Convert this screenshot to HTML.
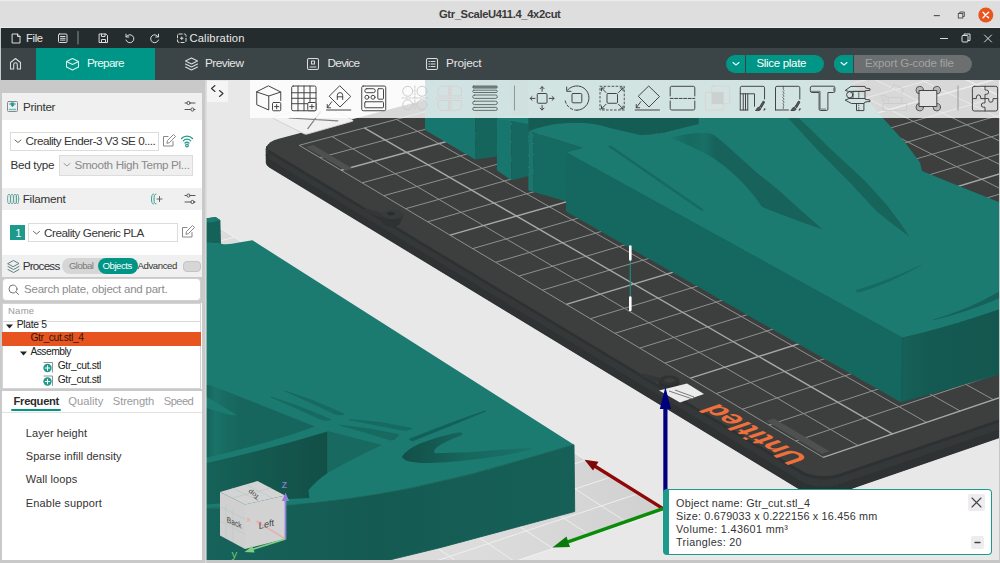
<!DOCTYPE html>
<html><head><meta charset="utf-8">
<style>
*{box-sizing:border-box;margin:0;padding:0}
html,body{width:1000px;height:563px;overflow:hidden;background:#e8e8e8;font-family:"Liberation Sans",sans-serif;}
#app{position:relative;width:1000px;height:563px;overflow:hidden;background:#c9c9c9}
.abs{position:absolute}
#title{left:0;top:0;width:1000px;height:28px;background:#dedede;border-bottom:1px solid #ebebeb;border-top:1px solid #ececec}
#title .t{position:absolute;left:0;width:1000px;top:7px;text-align:center;font-weight:bold;font-size:11.5px;color:#3a3a3a;letter-spacing:0.1px}
#menubar{left:1px;top:28px;width:999px;height:20px;background:#252c2e;color:#e8e8e8;font-size:11.5px}
#tabbar{left:1px;top:48px;width:999px;height:32px;background:#3b4548;color:#e6e6e6;font-size:12px}
#tabbar .active{position:absolute;left:35px;top:0;width:119px;height:32px;background:#009687}
.lb{position:absolute;white-space:nowrap;line-height:1}
#left{left:2px;top:93px;width:200px;height:467px;background:#fff}
.hdr{position:absolute;left:0;width:200px;background:#f0f0f0}
.txt{position:absolute;white-space:nowrap;color:#333}
svg{position:absolute;left:0;top:0}
</style></head><body>
<div id="app">
<svg width="1000" height="563" viewBox="0 0 1000 563">
<defs>
 <clipPath id="vp"><rect x="205" y="80" width="795" height="481"/></clipPath>
 <linearGradient id="flg" gradientUnits="userSpaceOnUse" x1="663" y1="508" x2="480" y2="520">
  <stop offset="0" stop-color="#d0d0d0"/><stop offset="1" stop-color="#dcdcdc"/>
 </linearGradient>
 <linearGradient id="frontL" gradientUnits="userSpaceOnUse" x1="205" y1="0" x2="575" y2="0">
  <stop offset="0" stop-color="#16635b"/><stop offset="0.45" stop-color="#145a52"/><stop offset="0.7" stop-color="#155d55"/><stop offset="1" stop-color="#166058"/>
 </linearGradient>
 <linearGradient id="frontR" gradientUnits="userSpaceOnUse" x1="900" y1="0" x2="1000" y2="0">
  <stop offset="0" stop-color="#166159"/><stop offset="0.3" stop-color="#145a53"/><stop offset="1" stop-color="#14574f"/>
 </linearGradient>
 <linearGradient id="pk2" gradientUnits="userSpaceOnUse" x1="670" y1="0" x2="760" y2="0">
  <stop offset="0" stop-color="#19756a"/><stop offset="0.22" stop-color="#166a60"/><stop offset="0.38" stop-color="#187066"/><stop offset="0.5" stop-color="#17635b"/><stop offset="1" stop-color="#17635b"/>
 </linearGradient>
 <linearGradient id="hook" gradientUnits="userSpaceOnUse" x1="402" y1="0" x2="534" y2="0">
  <stop offset="0" stop-color="#125048"/><stop offset="0.25" stop-color="#145a52"/><stop offset="0.5" stop-color="#17685f"/><stop offset="1" stop-color="#197268"/>
 </linearGradient>
 <linearGradient id="pkA" gradientUnits="userSpaceOnUse" x1="205" y1="0" x2="240" y2="0">
  <stop offset="0" stop-color="#15625a"/><stop offset="0.3" stop-color="#1a7268"/><stop offset="0.6" stop-color="#186b61"/><stop offset="1" stop-color="#17665d"/>
 </linearGradient>
 <linearGradient id="wallB" gradientUnits="userSpaceOnUse" x1="205" y1="0" x2="328" y2="0">
  <stop offset="0" stop-color="#16625a"/><stop offset="0.45" stop-color="#14594f"/><stop offset="1" stop-color="#124f47"/>
 </linearGradient>
</defs>
<g clip-path="url(#vp)">
<rect x="205" y="80" width="795" height="483" fill="#e8e8e8"/>
<polygon points="665.1,510.6 151.5,184.6 -693.2,409.8 -258.8,822.3" fill="url(#flg)"/>
<path d="M151.5,184.6 L665.1,510.6 M665.1,510.6 L-258.8,822.3 M117.0,193.8 L628.1,523.1 M638.2,493.6 L-281.9,800.3 M82.2,203.1 L590.6,535.7 M611.8,476.8 L-304.7,778.8 M47.1,212.5 L552.8,548.5 M585.7,460.2 L-327.0,757.5 M11.6,221.9 L514.5,561.4 M560.0,443.9 L-349.0,736.6 M-24.2,231.5 L475.8,574.5 M534.6,427.8 L-370.7,716.0 M-60.4,241.1 L436.6,587.7 M509.6,411.9 L-392.0,695.8 M-97.0,250.9 L396.9,601.0 M485.0,396.3 L-413.1,675.8 M-133.9,260.7 L356.8,614.6 M460.6,380.8 L-433.7,656.2 M-171.3,270.7 L316.2,628.3 M436.6,365.6 L-454.1,636.9 M-208.9,280.7 L275.2,642.1 M412.9,350.6 L-474.2,617.8 M-247.0,290.9 L233.6,656.2 M389.5,335.7 L-493.9,599.1 M-285.5,301.1 L191.5,670.3 M366.5,321.1 L-513.4,580.6 M-324.4,311.5 L149.0,684.7 M343.7,306.6 L-532.6,562.4 M-363.6,322.0 L105.9,699.2 M321.2,292.4 L-551.5,544.4 M-403.3,332.5 L62.2,714.0 M299.1,278.3 L-570.1,526.8 M-443.4,343.2 L18.1,728.9 M277.2,264.4 L-588.4,509.3 M-484.0,354.0 L-26.6,743.9 M255.5,250.7 L-606.5,492.1 M-524.9,365.0 L-71.9,759.2 M234.2,237.1 L-624.4,475.2 M-566.3,376.0 L-117.8,774.7 M213.1,223.8 L-642.0,458.5 M-608.2,387.2 L-164.2,790.3 M192.3,210.6 L-659.3,442.1 M-650.5,398.4 L-211.2,806.2 M171.8,197.5 L-676.4,425.8 M-693.2,409.8 L-258.8,822.3 M151.5,184.6 L-693.2,409.8" stroke="#f4f4f4" stroke-width="0.9" fill="none" opacity="0.85"/>
<!-- far sign -->
<polygon points="269.8,167.5 267.3,165.4 266.3,163.1 266.9,160.7 269.1,158.4 272.6,156.4 277.3,154.8 943.4,-23.2 948.0,-24.1 953.2,-24.5 958.7,-24.4 964.0,-23.8 968.8,-22.8 972.8,-21.4 1540.4,237.8 1544.3,240.1 1546.8,242.5 1547.8,245.1 1547.1,247.5 1544.9,249.7 1541.1,251.5 838.8,492.9 832.7,494.5 826.0,495.2 819.0,495.1 812.2,494.2 806.1,492.5 801.1,490.2" fill="#2e3131"/>
<polygon points="269.6,153.3 267.1,151.2 266.1,148.9 266.7,146.5 268.9,144.3 272.4,142.3 277.1,140.7 944.1,-36.1 948.7,-37.0 953.9,-37.5 959.4,-37.4 964.7,-36.8 969.5,-35.8 973.5,-34.3 1542.1,223.4 1546.0,225.6 1548.5,228.1 1549.5,230.7 1548.8,233.1 1546.6,235.3 1542.8,237.0 839.5,477.1 833.4,478.6 826.7,479.4 819.6,479.3 812.8,478.3 806.7,476.7 801.7,474.3" fill="#2e3131"/>
<polygon points="269.8,167.5 267.3,165.4 267.2,157.6 269.7,159.7" fill="#2f3232" stroke="#2f3232" stroke-width="0.5"/>
<polygon points="269.7,159.7 267.2,157.6 267.1,151.2 269.6,153.3" fill="#353838" stroke="#353838" stroke-width="0.5"/>
<polygon points="267.3,165.4 266.3,163.1 266.2,155.3 267.2,157.6" fill="#2f3232" stroke="#2f3232" stroke-width="0.5"/>
<polygon points="267.2,157.6 266.2,155.3 266.1,148.9 267.1,151.2" fill="#353838" stroke="#353838" stroke-width="0.5"/>
<polygon points="266.3,163.1 266.9,160.7 266.8,152.9 266.2,155.3" fill="#2f3232" stroke="#2f3232" stroke-width="0.5"/>
<polygon points="266.2,155.3 266.8,152.9 266.7,146.5 266.1,148.9" fill="#353838" stroke="#353838" stroke-width="0.5"/>
<polygon points="266.9,160.7 269.1,158.4 269.0,150.6 266.8,152.9" fill="#2f3232" stroke="#2f3232" stroke-width="0.5"/>
<polygon points="266.8,152.9 269.0,150.6 268.9,144.3 266.7,146.5" fill="#353838" stroke="#353838" stroke-width="0.5"/>
<polygon points="269.1,158.4 272.6,156.4 272.5,148.6 269.0,150.6" fill="#2f3232" stroke="#2f3232" stroke-width="0.5"/>
<polygon points="269.0,150.6 272.5,148.6 272.4,142.3 268.9,144.3" fill="#353838" stroke="#353838" stroke-width="0.5"/>
<polygon points="272.6,156.4 277.3,154.8 277.2,147.0 272.5,148.6" fill="#2f3232" stroke="#2f3232" stroke-width="0.5"/>
<polygon points="272.5,148.6 277.2,147.0 277.1,140.7 272.4,142.3" fill="#353838" stroke="#353838" stroke-width="0.5"/>
<polygon points="277.3,154.8 943.4,-23.2 943.8,-30.3 277.2,147.0" fill="#2f3232" stroke="#2f3232" stroke-width="0.5"/>
<polygon points="277.2,147.0 943.8,-30.3 944.1,-36.1 277.1,140.7" fill="#353838" stroke="#353838" stroke-width="0.5"/>
<polygon points="943.4,-23.2 948.0,-24.1 948.4,-31.2 943.8,-30.3" fill="#2f3232" stroke="#2f3232" stroke-width="0.5"/>
<polygon points="943.8,-30.3 948.4,-31.2 948.7,-37.0 944.1,-36.1" fill="#353838" stroke="#353838" stroke-width="0.5"/>
<polygon points="948.0,-24.1 953.2,-24.5 953.6,-31.6 948.4,-31.2" fill="#2f3232" stroke="#2f3232" stroke-width="0.5"/>
<polygon points="948.4,-31.2 953.6,-31.6 953.9,-37.5 948.7,-37.0" fill="#353838" stroke="#353838" stroke-width="0.5"/>
<polygon points="953.2,-24.5 958.7,-24.4 959.1,-31.5 953.6,-31.6" fill="#2f3232" stroke="#2f3232" stroke-width="0.5"/>
<polygon points="953.6,-31.6 959.1,-31.5 959.4,-37.4 953.9,-37.5" fill="#353838" stroke="#353838" stroke-width="0.5"/>
<polygon points="958.7,-24.4 964.0,-23.8 964.4,-31.0 959.1,-31.5" fill="#2f3232" stroke="#2f3232" stroke-width="0.5"/>
<polygon points="959.1,-31.5 964.4,-31.0 964.7,-36.8 959.4,-37.4" fill="#353838" stroke="#353838" stroke-width="0.5"/>
<polygon points="964.0,-23.8 968.8,-22.8 969.2,-29.9 964.4,-31.0" fill="#2f3232" stroke="#2f3232" stroke-width="0.5"/>
<polygon points="964.4,-31.0 969.2,-29.9 969.5,-35.8 964.7,-36.8" fill="#353838" stroke="#353838" stroke-width="0.5"/>
<polygon points="968.8,-22.8 972.8,-21.4 973.2,-28.5 969.2,-29.9" fill="#2f3232" stroke="#2f3232" stroke-width="0.5"/>
<polygon points="969.2,-29.9 973.2,-28.5 973.5,-34.3 969.5,-35.8" fill="#353838" stroke="#353838" stroke-width="0.5"/>
<polygon points="972.8,-21.4 1540.4,237.8 1541.3,229.9 973.2,-28.5" fill="#2f3232" stroke="#2f3232" stroke-width="0.5"/>
<polygon points="973.2,-28.5 1541.3,229.9 1542.1,223.4 973.5,-34.3" fill="#353838" stroke="#353838" stroke-width="0.5"/>
<polygon points="1540.4,237.8 1544.3,240.1 1545.2,232.1 1541.3,229.9" fill="#2f3232" stroke="#2f3232" stroke-width="0.5"/>
<polygon points="1541.3,229.9 1545.2,232.1 1546.0,225.6 1542.1,223.4" fill="#353838" stroke="#353838" stroke-width="0.5"/>
<polygon points="1544.3,240.1 1546.8,242.5 1547.8,234.6 1545.2,232.1" fill="#2f3232" stroke="#2f3232" stroke-width="0.5"/>
<polygon points="1545.2,232.1 1547.8,234.6 1548.5,228.1 1546.0,225.6" fill="#353838" stroke="#353838" stroke-width="0.5"/>
<polygon points="1546.8,242.5 1547.8,245.1 1548.7,237.2 1547.8,234.6" fill="#2f3232" stroke="#2f3232" stroke-width="0.5"/>
<polygon points="1547.8,234.6 1548.7,237.2 1549.5,230.7 1548.5,228.1" fill="#353838" stroke="#353838" stroke-width="0.5"/>
<polygon points="1547.8,245.1 1547.1,247.5 1548.1,239.6 1548.7,237.2" fill="#2f3232" stroke="#2f3232" stroke-width="0.5"/>
<polygon points="1548.7,237.2 1548.1,239.6 1548.8,233.1 1549.5,230.7" fill="#353838" stroke="#353838" stroke-width="0.5"/>
<polygon points="1547.1,247.5 1544.9,249.7 1545.8,241.8 1548.1,239.6" fill="#2f3232" stroke="#2f3232" stroke-width="0.5"/>
<polygon points="1548.1,239.6 1545.8,241.8 1546.6,235.3 1548.8,233.1" fill="#353838" stroke="#353838" stroke-width="0.5"/>
<polygon points="1544.9,249.7 1541.1,251.5 1542.1,243.5 1545.8,241.8" fill="#2f3232" stroke="#2f3232" stroke-width="0.5"/>
<polygon points="1545.8,241.8 1542.1,243.5 1542.8,237.0 1546.6,235.3" fill="#353838" stroke="#353838" stroke-width="0.5"/>
<polygon points="1541.1,251.5 838.8,492.9 839.2,484.2 1542.1,243.5" fill="#2f3232" stroke="#2f3232" stroke-width="0.5"/>
<polygon points="1542.1,243.5 839.2,484.2 839.5,477.1 1542.8,237.0" fill="#353838" stroke="#353838" stroke-width="0.5"/>
<polygon points="838.8,492.9 832.7,494.5 833.1,485.8 839.2,484.2" fill="#2f3232" stroke="#2f3232" stroke-width="0.5"/>
<polygon points="839.2,484.2 833.1,485.8 833.4,478.6 839.5,477.1" fill="#353838" stroke="#353838" stroke-width="0.5"/>
<polygon points="832.7,494.5 826.0,495.2 826.4,486.5 833.1,485.8" fill="#2f3232" stroke="#2f3232" stroke-width="0.5"/>
<polygon points="833.1,485.8 826.4,486.5 826.7,479.4 833.4,478.6" fill="#353838" stroke="#353838" stroke-width="0.5"/>
<polygon points="826.0,495.2 819.0,495.1 819.3,486.4 826.4,486.5" fill="#2f3232" stroke="#2f3232" stroke-width="0.5"/>
<polygon points="826.4,486.5 819.3,486.4 819.6,479.3 826.7,479.4" fill="#353838" stroke="#353838" stroke-width="0.5"/>
<polygon points="819.0,495.1 812.2,494.2 812.5,485.5 819.3,486.4" fill="#2f3232" stroke="#2f3232" stroke-width="0.5"/>
<polygon points="819.3,486.4 812.5,485.5 812.8,478.3 819.6,479.3" fill="#353838" stroke="#353838" stroke-width="0.5"/>
<polygon points="812.2,494.2 806.1,492.5 806.4,483.8 812.5,485.5" fill="#2f3232" stroke="#2f3232" stroke-width="0.5"/>
<polygon points="812.5,485.5 806.4,483.8 806.7,476.7 812.8,478.3" fill="#353838" stroke="#353838" stroke-width="0.5"/>
<polygon points="806.1,492.5 801.1,490.2 801.4,481.5 806.4,483.8" fill="#2f3232" stroke="#2f3232" stroke-width="0.5"/>
<polygon points="806.4,483.8 801.4,481.5 801.7,474.3 806.7,476.7" fill="#353838" stroke="#353838" stroke-width="0.5"/>
<polygon points="801.1,490.2 269.8,167.5 269.7,159.7 801.4,481.5" fill="#2f3232" stroke="#2f3232" stroke-width="0.5"/>
<polygon points="801.4,481.5 269.7,159.7 269.6,153.3 801.7,474.3" fill="#353838" stroke="#353838" stroke-width="0.5"/>
<polygon points="271.2,151.3 268.6,149.2 267.7,146.9 268.3,144.5 270.4,142.3 274.0,140.3 278.7,138.7 944.1,-37.6 948.7,-38.5 953.9,-38.9 959.3,-38.8 964.6,-38.2 969.5,-37.2 973.5,-35.8 1540.6,221.1 1544.6,223.4 1547.1,225.8 1548.1,228.4 1547.4,230.8 1545.1,233.0 1541.4,234.7 839.8,473.8 833.8,475.4 827.0,476.1 820.0,476.0 813.2,475.1 807.0,473.4 802.0,471.1" fill="#3c3f3e"/>

<path d="M299.2,145.3 L823.1,457.3 M299.2,145.3 L953.8,-29.2 M331.9,136.5 L857.9,445.5 M320.0,157.6 L976.2,-19.0 M396.4,119.3 L926.5,422.4 M362.3,182.8 L1021.7,1.8 M428.2,110.9 L960.2,411.0 M383.8,195.7 L1044.9,12.4 M459.7,102.5 L993.6,399.8 M405.6,208.7 L1068.3,23.1 M490.9,94.1 L1026.6,388.6 M427.7,221.8 L1092.0,33.9 M552.5,77.7 L1091.6,366.7 M472.7,248.6 L1140.1,55.9 M582.9,69.6 L1123.6,355.9 M495.7,262.3 L1164.6,67.1 M613.0,61.6 L1155.2,345.2 M518.9,276.1 L1189.4,78.4 M642.8,53.7 L1186.6,334.7 M542.5,290.1 L1214.5,89.8 M701.6,38.0 L1248.3,313.8 M590.5,318.7 L1265.5,113.1 M730.6,30.2 L1278.6,303.6 M614.9,333.3 L1291.5,125.0 M759.4,22.6 L1308.7,293.5 M639.7,348.1 L1317.8,137.0 M787.9,15.0 L1338.5,283.4 M664.9,363.1 L1344.4,149.2 M844.2,-0.0 L1397.1,263.6 M716.2,393.6 L1398.5,173.9 M871.9,-7.4 L1426.0,253.9 M742.4,409.2 L1426.1,186.5 M899.4,-14.8 L1454.6,244.2 M768.9,425.0 L1454.0,199.3 M926.7,-22.0 L1482.9,234.7 M795.8,441.0 L1482.3,212.2" stroke="#8d908f" stroke-width="1" fill="none"/>
<path d="M364.3,127.9 L892.4,433.9 M341.0,170.2 L998.8,-8.7 M521.9,85.9 L1059.3,377.6 M450.1,235.1 L1115.9,44.8 M672.3,45.8 L1217.6,324.2 M566.3,304.4 L1239.8,101.4 M816.1,7.4 L1367.9,273.5 M690.4,378.2 L1371.3,161.5 M953.8,-29.2 L1510.9,225.2 M823.1,457.3 L1510.9,225.2" stroke="#a6a8a7" stroke-width="1.4" fill="none"/>
<path d="M274,117.300 L318.500,104 Q320.400,103.400 322.300,104.400 L352.300,119.900 Q354,120.800 352,121.400 L307.400,134 Q305.400,134.600 303.500,133.600 L273.300,118.400 Q272.400,117.800 274,117.300Z" fill="#f0f0f0" stroke="#cfcfcf" stroke-width="0.900"/>
<path d="M289.200,118 L337.800,120.800 M320.400,111.800 L307.800,128.600" stroke="#808080" stroke-width="1.200" fill="none" stroke-linecap="round"/>
<!-- plate handles -->
<polygon points="306.0,147.0 313.2,145.1 353.0,168.7 345.7,170.7" fill="#4e5150"/>
<polygon points="766.3,420.9 774.0,418.4 829.4,451.3 821.8,453.9" fill="#4e5150"/>
<!-- knobs -->
<g><polygon points="364,208.500 383,213 384,219 362,210.500" fill="#343737"/><ellipse cx="391.500" cy="223" rx="8.500" ry="4" fill="#2f3232"/><polygon points="381.500,214.500 403.500,214.500 400,223.500 383,223.500" fill="#2f3232"/><ellipse cx="392.500" cy="214.500" rx="11" ry="4.600" fill="#383b3b"/><ellipse cx="391" cy="213.600" rx="4" ry="1.800" fill="#2b2e2e"/></g>
<g><ellipse cx="669" cy="383" rx="10.500" ry="5" fill="#2b2e2e"/><ellipse cx="669" cy="380.500" rx="10.500" ry="5" fill="#303333"/><ellipse cx="669.500" cy="380.300" rx="5.200" ry="2.400" fill="#3a3d3c"/><polygon points="643,373.500 659,377.500 659,383 641,376.500" fill="#343737"/></g>
<!-- plate label -->
<polygon points="659,390.500 687,383.500 704,394 680,402.500" fill="#ececec"/>
<path d="M669 391l22 7.500a2 2 0 0 0 3-1.500l-19-7" stroke="#7b7b7b" stroke-width="1" fill="none"/>
<text transform="matrix(-0.816,-0.50,0.95,-0.33,809,459)" font-family="Liberation Sans,sans-serif" font-size="30" font-weight="bold" fill="#f0703c" textLength="112" lengthAdjust="spacingAndGlyphs">Untitled</text>

<!-- ===== top-right model ===== -->
<!-- block1 -->
<polygon points="425,80 425,130 475.200,159.600 475.200,80" fill="#17766d"/>
<polygon points="475.200,80 475.200,159.600 496.900,156.600 496.900,80" fill="#15655d"/>
<!-- block2 -->
<polygon points="496.900,80 496.900,170.200 511.400,180.300 511.400,80" fill="#17766d"/>
<polygon points="511.400,80 511.400,180.300 528.400,176.300 528.400,80" fill="#15675f"/>
<polygon points="496.900,119.500 505,116 540,116 528.400,124 511.400,121" fill="#1b7d72"/>
<!-- block3 -->
<polygon points="528.400,131.100 528.400,190.300 533.500,192 533.500,133" fill="#18786f"/>
<polygon points="533.500,132.600 583,147.800 566.600,152.200 566.600,201.400 533.500,192" fill="#156a61"/>
<!-- main left side face -->
<polygon points="566.600,152.200 566.600,211.400 750,316 901.400,402.100 902.500,337.500" fill="#15685f" stroke="#15685f" stroke-width="1"/>
<!-- front right face -->
<path d="M902.500,337.500 L901.400,402.100 L1000,374 L1000,309 Q945,328 902.500,337.500Z" fill="url(#frontR)" stroke="#145a53" stroke-width="0.8"/>
<!-- top surface -->
<polygon points="528.400,80 700,80 700,126 640,136 585,125 560,123.500 528.400,131.100" fill="#1b7b70"/>
<path d="M902.500,337.500 L566.600,152.200 L583,147.800 L528.400,131.100 Q545,125 560,123.500 Q590,121 610,128 L640,135 Q660,134 670,131 L698.600,124 L698.600,80 L850,80 L882.500,117.500 L905,142.500 L920,162.500 L922,171 L950,182.500 L1000,202.500 L1000,309 Q945,328 902.500,337.500Z" fill="#1b7b70"/>
<!-- dark band under toolbar -->
<path d="M528.400,117.600 L528.400,131.100 Q545,125 560,123.500 Q590,121 610,128 L640,135 Q658,134 670,131 L698.600,124 L698.600,117.600Z" fill="#145c54"/>
<!-- groove1 -->
<path d="M608.500,146.500 L611,146 L703,209.500 L702,210.800Z" fill="#176a60" stroke="#176a60" stroke-width="0.800"/>
<!-- pocket2 -->
<path d="M670.300,137.600 Q681,135 692.600,133.600 Q701,132.600 707.600,133 Q711,133.500 714,135.100 Q725,143.500 735.300,153.200 L756.600,172.400 L777.900,189.500 L799.300,208.700 L822.700,229.600 Q795,220 766.200,208.700 Q762.500,207.500 760.900,205.500 Q757,199.500 752.300,193.800 Q744,184 735.300,175.600 Q725,166 714,158.600 Q704,152.500 692.600,147.300 Q681,142 670.300,137.600Z" fill="url(#pk2)"/>
<!-- groove2 -->
<path d="M787.700,117.600 L798.400,117.600 L829,147.500 L864.600,180.600 Q878,195 888,206.600 Q900,222 909.500,236.800 Q892,224 876.400,211.300 L850.400,183 L817.300,149.800Z" fill="#17645b"/>
<!-- groove3 -->
<path d="M856,290.500 Q890,280 921,265.200 Q892,282 860,292 Q856,292 856,290.500Z" fill="#176a60" stroke="#176a60" stroke-width="0.500"/>
<!-- groove4 -->
<path d="M932,320 Q970,309 1000,291 L1000,298 Q965,313 932,320.500Z" fill="#16625a"/>
<!-- selected object -->
<path d="M630.300,246 V310" stroke="#1d8a7e" stroke-width="1.200"/>
<path d="M630.300,246.500 V259.500 M630.300,297.500 V310" stroke="#fff" stroke-width="2.600" stroke-linecap="round"/>

<!-- ===== bottom-left model ===== -->
<!-- left blob -->
<path d="M205,218.600 L215.600,217 L220.400,220.200 L221,244 L205,243Z" fill="#15625a"/>
<path d="M205,218.600 L215.600,217 L220.400,220.200 L212,222.300 L205,222.500Z" fill="#1b7b70"/>
<!-- top surface -->
<path d="M205,242 L221,243.700 Q226,244.800 232,243.800 L239,242.600 L252.400,240.300 L574,444.800 Q520,461 470,474.500 Q430,484 405,489.300 Q350,500 289,505.300 Q250,507.500 205,508.500Z" fill="#1b7b70"/>
<!-- front face -->
<path d="M205,508.500 Q250,507.500 289,505.300 Q350,500 405,489.300 Q430,484 470,474.500 Q520,461 574,444.800 L574.700,511.500 L440,547.700 L377,563 L205,563Z" fill="url(#frontL)" stroke="#155d55" stroke-width="0.9"/>
<!-- pocket A (triangle) -->
<path d="M205,384.800 Q210,385 216,387.300 L315,426.400 Q270,443 205,458Z" fill="url(#pkA)"/>
<path d="M205,395.500 L237,415.300 Q232,415.500 226,414 L205,407.500Z" fill="#1b7b70"/>
<!-- ridge then pocket B wall -->
<path d="M205,463.500 Q270,449 327.500,431.500 L327.500,473 Q316,481 308.400,490.300 L309.500,498 L289,499 L205,504.500Z" fill="url(#wallB)"/>
<path d="M327.500,431 L381.700,445 Q352,459 327.500,473Z" fill="#18695f"/>
<path d="M205,506 L290,503 Q296,492 310,484 Q285,490 262,492 Q240,493 205,492Z" fill="#1b7b70" opacity="0"/>
<!-- slots -->
<path d="M285,391 Q315,400 344,414 Q340,416 335,414 Q310,402 285,391Z" fill="#176a60" stroke="#176a60" stroke-width="0.800"/>
<path d="M271,397 Q300,406 331,419.500 Q327,421.500 321,419.500 Q296,408 271,397Z" fill="#176a60" stroke="#176a60" stroke-width="0.800"/>
<path d="M349,419.500 Q380,421 412,428.500 Q408,431 402,430 Q375,425 349,419.500Z" fill="#176a60" stroke="#176a60" stroke-width="0.800"/>
<path d="M339,425 Q370,428 399,434.500 Q395,441 390,440 Q365,432 339,425Z" fill="#18695f" stroke="#18695f" stroke-width="0.600"/>
<!-- groove -->
<path d="M410,439.200 Q450,423 485.500,411 Q450,426 412,440.800Z" fill="#14605a" stroke="#14605a" stroke-width="1.300"/>
<!-- hook pocket -->
<path d="M402,456.500 Q407,449 420,443.600 Q440,436 459,432.300 Q464,432.500 461.500,435.500 Q445,441 436.500,447.500 Q432.500,451.500 435,453.300 Q470,452.800 500,449.800 Q520,448.300 534,448.300 Q521,452.500 500,456 Q460,462 430,463 Q404,463.500 402,456.500Z" fill="url(#hook)"/>

<!-- axes -->
<path d="M665.400,508 V405" stroke="#00007c" stroke-width="4.2"/>
<path d="M665.400,387 L659.800,409 L671,409Z" fill="#00007c"/>
<path d="M663,508.600 L593,465" stroke="#8e0808" stroke-width="3.300"/>
<path d="M584.500,459.800 L598.500,461.800 L593,470.500Z" fill="#7e0606"/>
<path d="M663,508.600 L568,541.800" stroke="#0a8c0a" stroke-width="3.400"/>
<path d="M552.500,547.500 L566.500,536.500 L570,547Z" fill="#0a7a0a"/>

<!-- view cube -->
<g>
<polygon points="220,492 257.500,481 285,495.500 245,504.500" fill="#d4d4d4"/>
<polygon points="220,492 245,504.500 245,549 220,535.500" fill="#d0d0d0"/>
<polygon points="245,504.500 285,495.500 285,539 245,549" fill="#d2d2d2"/>
<path d="M232.500,488.300 L259,500.800 M246,484.500 L272,498 M232,498 L271,488 M226,506 V538.500 M233,509 V542 M220,506.500 L245,519 M220,521 L245,534" stroke="#bcc9c9" stroke-width="0.700" fill="none"/>
<path d="M285.500,539 L260,523.500" stroke="#e3b3b3" stroke-width="1.600"/><path d="M255.500,520.500 L262.500,521.500 L259.500,526Z" fill="#e3b3b3"/>
<path d="M285.500,539 V498" stroke="#8f80d8" stroke-width="1.800"/>
<path d="M285.500,492.500 L281.800,501 L289.200,501Z" fill="#8f80d8"/>
<path d="M285.500,539 L252,549.500" stroke="#80cf80" stroke-width="1.800"/>
<path d="M244.500,552 L252.500,546 L254.500,552.500Z" fill="#80cf80"/>
<text x="281.500" y="487.500" font-size="11.500" fill="#8f80d8" font-family="Liberation Sans,sans-serif">z</text>
<text x="231.500" y="557.500" font-size="11.500" fill="#6fc66f" font-family="Liberation Sans,sans-serif">y</text>
<text x="246.500" y="521.500" font-size="8" fill="#e7a5a5" font-family="Liberation Sans,sans-serif">x</text>
<text transform="matrix(0.780,0.340,0,1,226.800,522.300)" font-size="8.500" fill="#444" font-family="Liberation Sans,sans-serif">Back</text>
<text transform="matrix(0.970,-0.235,0,1,258.800,529.300)" font-size="9.500" fill="#444" font-family="Liberation Sans,sans-serif">Left</text>
<text transform="matrix(-0.776,-0.580,0.490,-0.660,260,496.500)" font-size="8" fill="#444" font-family="Liberation Sans,sans-serif">Top</text>
</g>
</g>
<!-- borders -->
<rect x="205" y="560" width="795" height="3" fill="#c6c6c6"/>
<rect x="205" y="80" width="1.600" height="483" fill="#d8d8d8"/>
<rect x="999" y="80" width="1" height="483" fill="#c6c6c6"/>
</svg>

<div class="abs" style="left:206.500px;top:81px;width:21.500px;height:20.500px;background:rgba(255,255,255,0.55)"></div>
<div class="abs" style="left:250px;top:80px;width:750px;height:37.500px;background:rgba(255,255,255,0.8)"></div>
<svg width="1000" height="563" viewBox="0 0 1000 563" fill="none" stroke="#454545" stroke-width="1" stroke-linejoin="round" stroke-linecap="round">
<path d="M215 85.500l-3.500 3 3.500 3 M219.500 90.500l3.500 3 -3.500 3" stroke="#333" stroke-width="1.100"/>
<!-- 1 cube+ -->
<path d="M268.750 86l12 6-12 4-12-4z M256.750 92v12.750l12 5.250v-14 M280.750 92v8.500"/>
<rect x="272.500" y="102.500" width="8.250" height="8.250" rx="1" fill="#fafafa"/><path d="M274.500 106.600h4.300M276.650 104.500v4.300"/>
<!-- 2 grid+ -->
<rect x="291.700" y="86" width="24.300" height="24.750" rx="1.500"/>
<path d="M298 86v24.750M304 86v24.750M310 86v16.500M291.700 92.750h24.300M291.700 98.300h24.300M291.700 103.700h16"/>
<rect x="307.750" y="102.500" width="8.250" height="8.250" rx="1" fill="#fafafa"/><path d="M309.750 106.600h4.300M311.900 104.500v4.300"/>
<!-- 3 auto orient -->
<path d="M340 86l10.800 10.500-10.800 10.500-10.500-10.500z M326.500 110h24.300 M331.750 101.750l-4.500 6 M327.250 104.500v3.250h3.300"/>
<path d="M337.300 99.500v-4.200a2.700 2.700 0 0 1 5.400 0v4.200 M337.300 96.800h5.400"/>
<!-- 4 arrange -->
<rect x="361.750" y="86" width="24" height="24.750" rx="1.500"/>
<rect x="364.750" y="88.700" width="10.500" height="4" rx="2"/><circle cx="366.900" cy="97.250" r="2"/><circle cx="373" cy="97.250" r="2"/>
<rect x="377.800" y="88.700" width="5.700" height="10.500" rx="0.800"/><rect x="364.750" y="101.750" width="18.750" height="6" rx="0.800"/>
<!-- 5 disabled split -->
<g stroke="#c9cccb"><circle cx="407.750" cy="91.250" r="5"/><circle cx="422" cy="91.250" r="5"/><circle cx="407.750" cy="104.750" r="5"/><circle cx="422" cy="104.750" r="5"/><path d="M402 98h26M414.900 86v24" stroke-dasharray="2 1.500"/></g>
<!-- 6 disabled split parts -->
<g stroke="#d9d0d0"><path d="M448 86h-5a5 5 0 0 0 -5 5v5h10z M451.500 86h5a5 5 0 0 1 5 5v5h-10z M448 110.500h-5a5 5 0 0 1 -5 -5v-5h10z M451.500 110.500h5a5 5 0 0 0 5 -5v-5h-10z"/><path d="M436 98.200h27M449.750 85v26" stroke-dasharray="2 1.500"/></g>
<!-- 7 layers -->
<g stroke="#556463" stroke-width="0.9"><rect x="472.700" y="86" width="24.600" height="2.100" rx="1.050" fill="#7e8c8b"/><rect x="472.700" y="90.200" width="24.600" height="2.300" rx="1.150"/><rect x="472.700" y="95" width="24.600" height="3.400" rx="1.700"/><rect x="472.700" y="101.200" width="24.600" height="3.400" rx="1.700"/><rect x="472.700" y="107.400" width="24.600" height="3" rx="1.500"/></g>
<path d="M514.500 86v24" stroke="#8a9a98"/>
<!-- 8 move -->
<rect x="537.250" y="93.500" width="9.750" height="9.750" rx="1"/>
<path d="M542.100 91.250v-4.500M540.200 88.600l1.900-1.900 1.900 1.900 M542.100 105.500v4.500M540.200 108.100l1.900 1.900 1.900-1.900 M535 98.400h-4.800M532.100 96.500l-1.900 1.900 1.900 1.900 M549.250 98.400h4.800M552.150 96.500l1.900 1.900-1.900 1.900"/>
<!-- 9 rotate -->
<rect x="572" y="93.500" width="9.800" height="9.300" rx="1"/>
<path d="M567.600 90a12.200 12.200 0 1 1 9.400 20.200"/><path d="M577 110.200a12.200 12.200 0 0 1 -12.100 -11" stroke-dasharray="2.500 2"/>
<path d="M566.700 87v4.300h4.300"/>
<!-- 10 scale -->
<rect x="600" y="86.300" width="24.250" height="23.700" stroke-dasharray="1.800 2.200" stroke-width="0.9"/>
<rect x="607" y="93.500" width="10.500" height="9.750" rx="1"/>
<path d="M606 92.500l-4.500-4.500M601.500 90.800v-2.800h2.800 M618.500 92.500l4.500-4.500M620.200 88h2.800v2.800 M606 104.300l-4.500 4.500M601.500 106v2.800h2.800 M618.500 104.300l4.500 4.500M620.200 108.800h2.800v-2.800"/>
<!-- 11 lay flat -->
<path d="M649 86.300l10.500 10.200-10.500 10.500-10.500-10.500z M635.200 110h24.300 M640.750 101.750l-4.500 6 M636.250 104.500v3.250h3.300"/>
<!-- 12 cut -->
<path d="M670.200 96v-8.200a1.500 1.500 0 0 1 1.500-1.500h21.600a1.500 1.500 0 0 1 1.500 1.500v8.200 M670.200 101v7.500a1.500 1.500 0 0 0 1.500 1.500h21.600a1.500 1.500 0 0 0 1.500-1.500v-7.500"/><path d="M670.200 98.450h24.600" stroke-dasharray="3 1.500"/>
<!-- 13 disabled boolean -->
<g stroke="#ddd2d2"><rect x="711.750" y="86" width="18" height="17.700" rx="1"/><rect x="705.500" y="92.300" width="17.800" height="17.700" rx="1"/><rect x="711.750" y="92.300" width="11.550" height="11.400" fill="#c9cccb" stroke="none" opacity="0.8"/></g>
<!-- 14 support paint -->
<path d="M740.250 110v-22.200a1.500 1.500 0 0 1 1.500-1.500h21.300a1.500 1.500 0 0 1 1.500 1.500v11.200 M740.250 93.800h14.250v12.500 M743.250 93.800v16.200M745.500 93.800v16.200M747.750 93.800v16.200 M740.250 110h7.500"/>
<path d="M756 110.500c0.500-2 1.500-3 3-3.200l1.800 1.600c-0.300 1.500-2 2-4.800 1.600z M759.500 107l3.800-6 1.400 1-3.500 6 M763.800 110h1v-1.500" fill="#555"/>
<!-- 15 seam paint -->
<path d="M775.500 110v-22.200a1.500 1.500 0 0 1 1.500-1.500h21.300a1.500 1.500 0 0 1 1.500 1.500v11.200 M775.500 110h13"/>
<path d="M783.300 86.300v3l0.800 1-1.200 1.300 1.300 1.500-1.300 1.500 1.200 1.500-1.400 1.500 1.400 1.500-1.300 1.500 1.300 1.500-1.200 1.500 1 1.500-0.600 1.500v2" stroke-width="0.700"/>
<path d="M791.300 110.500c0.500-2 1.500-3 3-3.200l1.800 1.600c-0.300 1.500-2 2-4.800 1.600z M794.800 107l3.800-6 1.400 1-3.500 6 M799 110h1v-1.500" fill="#555"/>
<!-- 16 T -->
<path d="M810.300 87.700a1.500 1.500 0 0 1 1.500-1.500h21.600a1.500 1.500 0 0 1 1.500 1.500v3.300a1.500 1.500 0 0 1 -1.500 1.500h-5.500v16.700a1.300 1.300 0 0 1 -1.300 1.300h-6.200a1.300 1.300 0 0 1 -1.300-1.300v-16.700h-7.300a1.500 1.500 0 0 1 -1.500-1.500z"/>
<path d="M811.300 91.300h8.800v17.800h5.800 M833.800 88v3" stroke-width="0.700"/>
<!-- 17 caliper -->
<path d="M845.500 90.200l5.500-3.800h14l0.500 1.600 4.500 0.800v1.500l-5 0.500v0.600h-16z M845.500 100l3.500-1.500h16v0.700l5 0.800v1.500l-5 0.500-1 1.500h-12z"/>
<rect x="853.400" y="91.400" width="11.600" height="7.100"/><circle cx="849.700" cy="94.800" r="3.100"/>
<path d="M856.500 103.500v7.100h7.400v-7.100"/>
<path d="M858.800 92.500v5M858.800 105v1M858.800 107.500v1M858.800 109.500v0.500" stroke-width="0.800" stroke-dasharray="0.800 0.800"/>
<!-- 18 disabled -->
<g stroke="#cdcdcd"><rect x="883.300" y="103.500" width="23.500" height="6.900"/><path d="M888.600 97.400h13.200v6.100h-13.200z M881.500 95.200l5.500 1-3.300 5z M891.500 88l2.300-3.500 10 4.500-2.300 4.200"/></g>
<!-- 19 assembly -->
<g fill="#b9b9b9" stroke="#4a4a4a" stroke-width="0.900"><circle cx="919.700" cy="90.100" r="3.700"/><circle cx="936.800" cy="90.100" r="3.700"/><circle cx="919.700" cy="107.200" r="3.700"/><circle cx="936.800" cy="107.200" r="3.700"/></g>
<rect x="919.400" y="90.500" width="17.400" height="16" fill="#e2e2e2"/>
<path d="M958 86v24" stroke="#9a9a9a"/>
<!-- 20 puzzle -->
<rect x="972.400" y="86.300" width="25.200" height="24.700" rx="2"/>
<path d="M985 86.300v3.700h1.500a1.900 1.900 0 1 1 0 4.300h-1.500v4.300 M972.400 98.600h4v-1.500a1.900 1.900 0 1 1 4.300 0v1.500h4.300 M985 98.600h3.700v1.500a1.900 1.900 0 1 0 4.300 0v-1.500h4.600 M985 98.600v4.300h-1.500a1.900 1.900 0 1 0 0 4.300h1.500v3.800"/>

</svg>

<!-- title bar -->
<div id="title" class="abs">
<svg width="1000" height="28" viewBox="-0.8 0 1000 28" style="top:-0.5px">
 <rect x="933" y="14" width="6" height="1.2" fill="#555"/>
 <rect x="957.5" y="12.5" width="4.5" height="4.5" fill="none" stroke="#555" stroke-width="1"/>
 <path d="M959 12.5v-1.5h4.5v4.5h-1.5" fill="none" stroke="#555" stroke-width="1"/>
 <circle cx="985" cy="14" r="7.5" fill="#e9541f"/>
 <path d="M982.2 11.2l5.6 5.6M987.8 11.2l-5.6 5.6" stroke="#fff" stroke-width="1.4" stroke-linecap="round"/>
</svg></div>
<!-- menu bar -->
<div id="menubar" class="abs">
<svg width="998" height="20" viewBox="1 28 998 20" fill="none" stroke="#dcdcdc" stroke-width="1" stroke-linejoin="round" stroke-linecap="round">
 <path d="M12.5 34h5l2.500 2.500v6.500h-7.500z M17.500 34v2.500h2.500"/>
 <rect x="58.500" y="34" width="8.500" height="8.500" rx="1"/><path d="M60.500 36.500h4.500M60.500 38.300h4.500M60.500 40.100h4.500" stroke-width="1"/>
 <path d="M78 31.500v12.500" stroke="#8a9092" stroke-width="1"/>
 <path d="M99.500 34h6.500l1.500 1.500v7h-8z M101.500 34v2.500h3.500v-2.500 M101.500 42.500v-3h4v3"/>
 <path d="M126 34.200v2.800h2.800 M126.300 36.800a4 4 0 1 1 -0.300 3.200"/>
 <path d="M158.500 34.200v2.800h-2.800 M158.200 36.800a4 4 0 1 0 0.300 3.200"/>
 <rect x="177.500" y="34" width="8.500" height="8.500" rx="1.500" stroke-dasharray="3.200 2"/><path d="M180.500 38.250h2.500M181.750 37v2.500" stroke-width="1"/>
 <path d="M940.500 38.500h7" />
 <rect x="962" y="35.500" width="6" height="6.500" rx="1"/><path d="M964 35.500v-1.500h6v6.500h-2"/>
 <path d="M984.500 35l7 7M991.500 35l-7 7"/>
</svg>
</div>
<!-- tab bar -->
<div id="tabbar" class="abs">
<div class="active"></div>
<svg width="998" height="32" viewBox="1 48 998 32" fill="none" stroke="#dcdcdc" stroke-width="1.05" stroke-linejoin="round" stroke-linecap="round">
 <path d="M10.500 69v-6.500l5-4 5 4v6.500h-3.200v-4.500a1.800 1.800 0 0 0 -3.600 0v4.500z"/>
 <path d="M66.500 61.500l6-3 6 3v5.500l-6 3 -6-3z M66.500 61.500l6 3 6-3" stroke="#d9f4ef"/>
 <path d="M185.500 61l6-3 6 3 -6 3z M185.500 64l6 3 6-3 M185.500 67l6 3 6-3"/>
 <rect x="307.500" y="58.500" width="11" height="11" rx="1.500"/><path d="M310 67h6 M311.500 61h3v3h-3z"/>
 <rect x="426.500" y="58.500" width="11" height="11" rx="1.500"/><path d="M429 61.500h0.500M431 61.500h4M429 64h0.500M431 64h4M429 66.500h0.500M431 66.500h4" stroke-width="1"/>
</svg>
<!-- slice buttons -->
<div class="abs" style="left:725px;top:6.500px;width:98px;height:18px;border-radius:9px;background:#009687"></div>
<div class="abs" style="left:744px;top:6.500px;width:1px;height:18px;background:#3a4447"></div>
<div class="abs" style="left:833px;top:6.500px;width:138px;height:18px;border-radius:9px;background:#6b6f70"></div>
<div class="abs" style="left:833px;top:6.500px;width:19px;height:18px;border-radius:9px 0 0 9px;background:#009687"></div>
<div class="abs" style="left:852px;top:6.500px;width:1px;height:18px;background:#3a4447"></div>
<svg width="998" height="32" viewBox="1 48 998 32" fill="none" stroke="#e8fffb" stroke-width="1.100" stroke-linecap="round" stroke-linejoin="round">
 <path d="M733 62.500l3 2.500 3-2.500 M841 62.500l3 2.500 3-2.500"/>
</svg>
</div>
<!-- left panel -->
<div class="abs" style="left:0;top:80px;width:205px;height:483px;background:#c9c9c9"></div>
<div id="left" class="abs">
 <div class="hdr" style="top:0;height:27px"></div>
 <!-- printer combobox -->
 <div class="abs" style="left:8px;top:39px;width:149px;height:19px;border:1px solid #dcdcdc;background:#fff"></div>
 <div class="abs" style="left:57px;top:62px;width:134px;height:21px;border:1px solid #dcdcdc;background:#efefef"></div>
 <div class="hdr" style="top:95px;height:22px"></div>
 <!-- filament row -->
 <div class="abs" style="left:8px;top:132px;width:15px;height:15px;background:#1d9a8c"></div>
 <div class="abs" style="left:26px;top:130px;width:150px;height:19px;border:1px solid #dcdcdc;background:#fff"></div>
 <div class="hdr" style="top:162px;height:22px"></div>
 <div class="abs" style="left:60px;top:165px;width:76px;height:16px;border-radius:8px;background:#d6d6d6"></div>
 <div class="abs" style="left:96px;top:165px;width:40px;height:16px;border-radius:8px;background:#009687"></div>
 <div class="abs" style="left:181px;top:168px;width:18px;height:11px;border-radius:4px;background:#d6d6d6;border:1px solid #c4c4c4"></div>
 <!-- search -->
 <div class="abs" style="left:0;top:184px;width:200px;height:26px;background:#c9c9c9"></div>
 <div class="abs" style="left:0;top:185px;width:199px;height:23px;background:#fff;border:1px solid #d0d0d0;border-radius:4px"></div>
 <!-- object list -->
 <div class="abs" style="left:0;top:210px;width:199px;height:86px;background:#fff;border:1px solid #d4d4d4"></div>
 <div class="abs" style="left:1px;top:227.500px;width:197px;height:1px;background:#d9d9d9"></div>
 <div class="abs" style="left:0px;top:239px;width:199px;height:13.500px;background:#e8541f"></div>
 <!-- tabs -->
 <div class="abs" style="left:0;top:296px;width:200px;height:2px;background:#c9c9c9"></div>
 <div class="abs" style="left:9px;top:316px;width:50px;height:2px;background:#009687;border-radius:1px"></div>
 <div class="abs" style="left:0;top:319px;width:200px;height:1px;background:#e2e2e2"></div>
 <!-- icons -->
 <svg width="200" height="467" viewBox="2 93 200 467" fill="none" stroke="#555" stroke-width="1" stroke-linecap="round" stroke-linejoin="round">
  <!-- printer icon -->
  <rect x="7.500" y="101.500" width="10" height="10" rx="1" stroke="#7d7d7d" stroke-width="0.9"/><path d="M9.300 109.600h6.400" stroke="#6cc5ba" stroke-width="1.500"/><path d="M9.500 104h6" stroke="#1d9a8c" stroke-width="0.9"/><path d="M11.300 102.800h2.400v2.600l-1.200 1.400 -1.200-1.400z" stroke="#1d9a8c" fill="#1d9a8c" stroke-width="0.6"/>
  <!-- sliders icon -->
  <path d="M185 103h10M185 109.500h10" /><circle cx="188.500" cy="103" r="1.600" fill="#f0f0f0"/><circle cx="192.500" cy="109.500" r="1.600" fill="#f0f0f0"/>
  <path d="M185 195.500h10M185 202h10" /><circle cx="188.500" cy="195.500" r="1.600" fill="#f0f0f0"/><circle cx="192.500" cy="202" r="1.600" fill="#f0f0f0"/>
  <!-- combobox chevrons -->
  <path d="M15 140l3 2.500 3-2.500" stroke="#666"/>
  <path d="M64 163.500l3 2.500 3-2.500" stroke="#999"/>
  <path d="M33.500 231.500l3 2.500 3-2.500" stroke="#666"/>
  <!-- edit icons -->
  <path d="M168 136.500h-4.500v9.500h9.500v-4.500 M167 143l0.500-2.500 6-6 2 2 -6 6z" stroke="#7a7a7a" stroke-width="0.9"/>
  <path d="M187 227.500h-4.500v9.500h9.500v-4.500 M186 234l0.500-2.500 6-6 2 2 -6 6z" stroke="#7a7a7a" stroke-width="0.9"/>
  <!-- wifi -->
  <g stroke="#1d9a8c" stroke-width="1.200"><path d="M181.500 138.500a7.500 7.500 0 0 1 11 0 M183.300 140.800a5 5 0 0 1 7.400 0 M185 143a2.800 2.800 0 0 1 4 0"/><circle cx="187" cy="145.500" r="1.300"/></g>
  <!-- filament icon -->
  <g stroke="#4e9c92" stroke-width="0.800"><ellipse cx="9" cy="199" rx="1.500" ry="5"/><ellipse cx="12" cy="199" rx="1.500" ry="5"/><ellipse cx="15" cy="199" rx="1.500" ry="5"/><ellipse cx="17.500" cy="199" rx="1.200" ry="5"/></g>
  <g stroke="#1d9a8c" stroke-width="0.900"><path d="M153.500 194a2 5 0 0 0 0 10 M156 194a2 5 0 0 0 0 10"/><path d="M157 199h5M159.500 196.500v5" stroke="#555"/></g>
  <!-- process icon -->
  <g stroke="#5d7f7b"><path d="M8 263.500l5.500-3 5.500 3 -5.500 3z M8 266.500l5.500 3 5.500-3 M8 269.500l5.500 3 5.500-3"/></g>
  <!-- search icon -->
  <circle cx="13" cy="289" r="4" stroke="#777"/><path d="M16 292l2.500 2.500" stroke="#777"/>
  <!-- tree arrows -->
  <path d="M6 324.500h7l-3.500 4z" fill="#222" stroke="none"/>
  <path d="M20 351.500h7l-3.500 4z" fill="#222" stroke="none"/>
  <!-- part icons -->
  <g><path d="M44 362.500h8.500v9.500" stroke="#777" stroke-width="0.800"/><circle cx="47.500" cy="368" r="4.200" fill="#1d9a8c" stroke="none"/><path d="M45.300 368h4.400M47.500 365.800v4.400" stroke="#fff" stroke-width="1.100"/></g>
  <g><path d="M44 376h8.500v9.500" stroke="#777" stroke-width="0.800"/><circle cx="47.500" cy="381.500" r="4.200" fill="#1d9a8c" stroke="none"/><path d="M45.300 381.500h4.400M47.500 379.300v4.400" stroke="#fff" stroke-width="1.100"/></g>
 </svg>
</div>
<div class="abs" style="left:663px;top:489px;width:329px;height:66px;border-radius:4px;background:#fff;border:1px solid #1d9a8c;border-left:6px solid #1d9a8c"></div>
<div class="abs" style="left:968px;top:494px;width:17px;height:17px;background:#eeecee;border-radius:2px"></div>
<div class="abs" style="left:971px;top:536px;width:13px;height:13px;background:#eeecee;border-radius:2px"></div>
<svg width="1000" height="563" viewBox="0 0 1000 563" fill="none" stroke="#444" stroke-width="1.100" stroke-linecap="round"><path d="M972 498l9 9M981 498l-9 9"/><path d="M975 542.500h5" stroke-width="1.400"/></svg>

<div class="lb" style="left:439.00px;top:8.52px;font-size:11.20px;color:#3a3a3a;font-weight:bold;letter-spacing:-0.358px">Gtr_ScaleU411.4_4x2cut</div>
<div class="lb" style="left:26.00px;top:33.02px;font-size:11.20px;color:#e8e8e8;letter-spacing:-0.344px">File</div>
<div class="lb" style="left:189.50px;top:33.02px;font-size:11.20px;color:#e8e8e8;letter-spacing:0.146px">Calibration</div>
<div class="lb" style="left:87.00px;top:58.01px;font-size:11.80px;color:#e9fbf8;letter-spacing:-0.751px">Prepare</div>
<div class="lb" style="left:205.00px;top:58.01px;font-size:11.80px;color:#e6e6e6;letter-spacing:-0.501px">Preview</div>
<div class="lb" style="left:327.50px;top:58.01px;font-size:11.80px;color:#e6e6e6;letter-spacing:-0.710px">Device</div>
<div class="lb" style="left:446.00px;top:58.01px;font-size:11.80px;color:#e6e6e6;letter-spacing:-0.200px">Project</div>
<div class="lb" style="left:756.50px;top:57.77px;font-size:11.50px;color:#ffffff;letter-spacing:-0.307px">Slice plate</div>
<div class="lb" style="left:865.00px;top:57.77px;font-size:11.50px;color:#a0a4a5;letter-spacing:-0.180px">Export G-code file</div>
<div class="lb" style="left:23.00px;top:100.60px;font-size:11.70px;color:#333;letter-spacing:-0.326px">Printer</div>
<div class="lb" style="left:25.60px;top:135.30px;font-size:11.70px;color:#363636;letter-spacing:-0.501px">Creality Ender-3 V3 SE 0....</div>
<div class="lb" style="left:10.50px;top:159.40px;font-size:11.70px;color:#333;letter-spacing:-0.294px">Bed type</div>
<div class="lb" style="left:74.50px;top:159.40px;font-size:11.70px;color:#8a8a8a;letter-spacing:-0.342px">Smooth High Temp Pl...</div>
<div class="lb" style="left:22.70px;top:192.80px;font-size:11.70px;color:#333;letter-spacing:-0.267px">Filament</div>
<div class="lb" style="left:15.50px;top:227.61px;font-size:10.50px;color:#fff;letter-spacing:0.000px">1</div>
<div class="lb" style="left:44.10px;top:226.80px;font-size:11.70px;color:#363636;letter-spacing:-0.467px">Creality Generic PLA</div>
<div class="lb" style="left:22.70px;top:260.00px;font-size:11.70px;color:#333;letter-spacing:-0.773px">Process</div>
<div class="lb" style="left:68.90px;top:261.07px;font-size:9.60px;color:#7a7a7a;letter-spacing:-0.529px">Global</div>
<div class="lb" style="left:102.50px;top:261.07px;font-size:9.60px;color:#fff;letter-spacing:-0.457px">Objects</div>
<div class="lb" style="left:137.50px;top:261.07px;font-size:9.60px;color:#333;letter-spacing:-0.403px">Advanced</div>
<div class="lb" style="left:24.10px;top:283.67px;font-size:11.50px;color:#8c8c8c;letter-spacing:-0.233px">Search plate, object and part.</div>
<div class="lb" style="left:8.00px;top:306.17px;font-size:9.60px;color:#9a9a9a;letter-spacing:0.189px">Name</div>
<div class="lb" style="left:16.80px;top:319.88px;font-size:10.30px;color:#222;letter-spacing:-0.314px">Plate 5</div>
<div class="lb" style="left:30.40px;top:333.48px;font-size:10.30px;color:#2a1a12;letter-spacing:-0.400px">Gtr_cut.stl_4</div>
<div class="lb" style="left:30.40px;top:347.18px;font-size:10.30px;color:#222;letter-spacing:-0.521px">Assembly</div>
<div class="lb" style="left:57.70px;top:361.48px;font-size:10.30px;color:#222;letter-spacing:-0.322px">Gtr_cut.stl</div>
<div class="lb" style="left:57.70px;top:375.08px;font-size:10.30px;color:#222;letter-spacing:-0.322px">Gtr_cut.stl</div>
<div class="lb" style="left:13.60px;top:395.72px;font-size:11.20px;color:#2c2c2c;font-weight:bold;letter-spacing:-0.305px">Frequent</div>
<div class="lb" style="left:68.20px;top:395.72px;font-size:11.20px;color:#9a9a9a;letter-spacing:0.045px">Quality</div>
<div class="lb" style="left:112.80px;top:395.72px;font-size:11.20px;color:#9a9a9a;letter-spacing:-0.119px">Strength</div>
<div class="lb" style="left:163.80px;top:395.72px;font-size:11.20px;color:#9a9a9a;letter-spacing:-0.592px">Speed</div>
<div class="lb" style="left:25.80px;top:428.29px;font-size:11.00px;color:#333;letter-spacing:0.059px">Layer height</div>
<div class="lb" style="left:25.80px;top:451.29px;font-size:11.00px;color:#333;letter-spacing:0.052px">Sparse infill density</div>
<div class="lb" style="left:25.80px;top:474.39px;font-size:11.00px;color:#333;letter-spacing:0.119px">Wall loops</div>
<div class="lb" style="left:25.80px;top:497.89px;font-size:11.00px;color:#333;letter-spacing:0.163px">Enable support</div>
<div class="lb" style="left:676.10px;top:498.06px;font-size:10.80px;color:#333;letter-spacing:0.217px">Object name: Gtr_cut.stl_4</div>
<div class="lb" style="left:676.10px;top:511.26px;font-size:10.80px;color:#333;letter-spacing:0.202px">Size: 0.679033 x 0.222156 x 16.456 mm</div>
<div class="lb" style="left:676.10px;top:524.06px;font-size:10.80px;color:#333;letter-spacing:0.346px">Volume: 1.43601 mm³</div>
<div class="lb" style="left:676.10px;top:537.16px;font-size:10.80px;color:#333;letter-spacing:0.288px">Triangles: 20</div>
</div>
</body></html>
